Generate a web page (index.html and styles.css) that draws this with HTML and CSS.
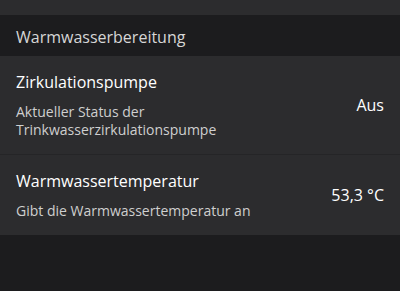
FILE: index.html
```html
<!DOCTYPE html>
<html lang="de">
<head>
<meta charset="utf-8">
<link rel="stylesheet" href="styles.css">
</head>
<body>
<div class="topbar"></div>
<div class="section-header">Warmwasserbereitung</div>
<div class="list">
  <div class="row">
    <div class="text">
      <div class="title">Zirkulationspumpe</div>
      <div class="subtitle">Aktueller Status der<br>Trinkwasserzirkulationspumpe</div>
    </div>
    <div class="value">Aus</div>
  </div>
  <div class="row">
    <div class="text">
      <div class="title">Warmwassertemperatur</div>
      <div class="subtitle">Gibt die Warmwassertemperatur an</div>
    </div>
    <div class="value">53,3 °C</div>
  </div>
</div>
</body>
</html>
```
FILE: styles.css
```css
html, body {
  margin: 0;
  padding: 0;
  background: #1c1c1e;
  font-family: "Open Sans", "Noto Sans", sans-serif;
}
.topbar {
  height: 15px;
  background: #2c2c2e;
}
.section-header {
  padding: 10px 16px 7px;
  font-size: 16px;
  line-height: 24px;
  color: #d6d6d6;
  background: #1c1c1e;
}
.list {
  display: flex;
  flex-direction: column;
  gap: 1px;
  background: #252527;
}
.row {
  display: flex;
  align-items: center;
  justify-content: space-between;
  padding: 14px 16px 15px;
  background: #2c2c2e;
}
.text {
  display: flex;
  flex-direction: column;
  gap: 9px;
}
.title {
  font-size: 16px;
  line-height: 24px;
  color: #ffffff;
}
.subtitle {
  font-size: 14px;
  line-height: 18px;
  color: #cfcfcf;
}
.value {
  font-size: 16px;
  line-height: 22px;
  color: #ffffff;
}
```
